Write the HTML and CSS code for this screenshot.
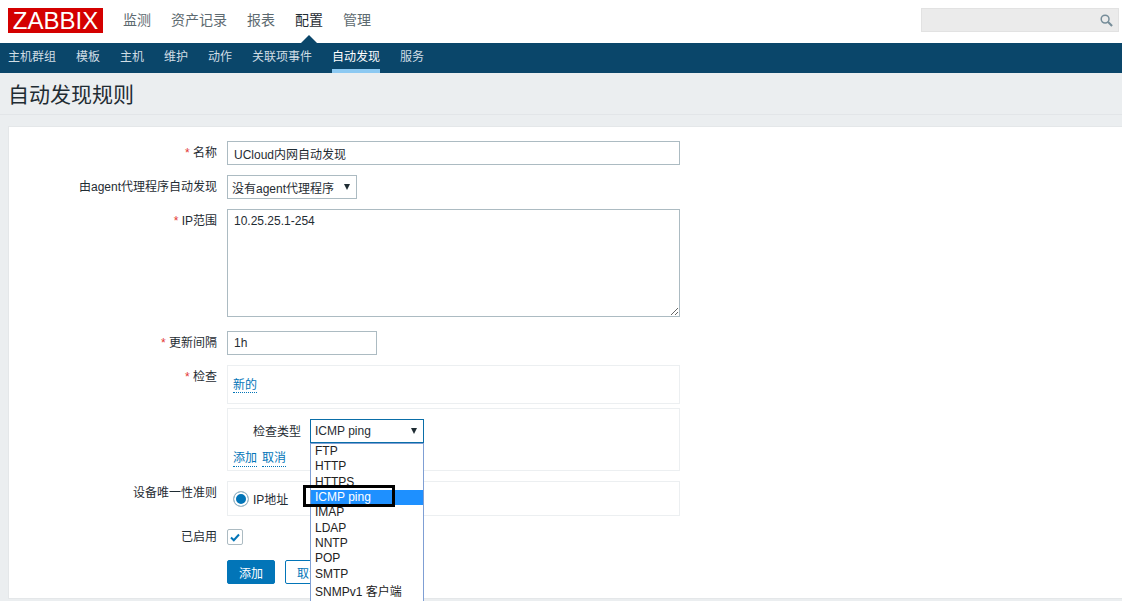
FILE: index.html
```html
<!DOCTYPE html>
<html lang="zh-CN">
<head>
    <meta charset="UTF-8">
    <meta name="viewport" content="width=device-width, initial-scale=1.0">
    <title>自动发现规则</title>
    <link rel="stylesheet" href="styles.css">
</head>
<body>

<!-- top menu -->
<header class="top-nav">
    <a href="#" class="logo">ZABBIX</a>
    <nav class="top-menu">
        <a href="#">监测</a>
        <a href="#">资产记录</a>
        <a href="#">报表</a>
        <a href="#" class="selected">配置</a>
        <a href="#">管理</a>
    </nav>
    <div class="search">
        <svg width="13" height="13" viewBox="0 0 14 14" fill="none" stroke="#768d99">
            <circle cx="5.5" cy="5.5" r="4.2" stroke-width="1.6"/>
            <path d="M8.7 8.7L13 13" stroke-width="2.2"/>
        </svg>
    </div>
</header>

<!-- sub menu -->
<nav class="sub-menu">
    <a href="#">主机群组</a>
    <a href="#">模板</a>
    <a href="#">主机</a>
    <a href="#">维护</a>
    <a href="#">动作</a>
    <a href="#">关联项事件</a>
    <a href="#" class="selected">自动发现</a>
    <a href="#">服务</a>
</nav>

<div class="title-bar">
    <h1>自动发现规则</h1>
</div>

<main class="form-box">
    <div class="row">
        <label class="row-label"><span class="star">*</span> 名称</label>
        <input class="text-input wide" type="text" value="UCloud内网自动发现">
    </div>
    <div class="row">
        <label class="row-label">由agent代理程序自动发现</label>
        <div class="select proxy-select"><span>没有agent代理程序</span><i class="caret"></i></div>
    </div>
    <div class="row row-textarea">
        <label class="row-label"><span class="star">*</span> IP范围</label>
        <textarea class="text-input wide ip-range">10.25.25.1-254</textarea>
    </div>
    <div class="row">
        <label class="row-label"><span class="star">*</span> 更新间隔</label>
        <input class="text-input short" type="text" value="1h">
    </div>
    <div class="row row-tight">
        <label class="row-label"><span class="star">*</span> 检查</label>
        <div class="field-box checks-box"><a href="#" class="link">新的</a></div>
    </div>
    <div class="row">
        <div class="row-label"></div>
        <div class="field-box check-form">
            <div class="check-type">
                <label class="type-label">检查类型</label>
                <div class="select type-select">
                    <span>ICMP ping</span><i class="caret"></i>
                    <!-- opened list -->
                    <ul class="dropdown">
                        <li>FTP</li>
                        <li>HTTP</li>
                        <li>HTTPS</li>
                        <li class="selected">ICMP ping</li>
                        <li>IMAP</li>
                        <li>LDAP</li>
                        <li>NNTP</li>
                        <li>POP</li>
                        <li>SMTP</li>
                        <li class="tall">SNMPv1 客户端</li>
                    </ul>
                    <div class="mark"></div>
                </div>
            </div>
            <div class="check-links">
                <a href="#" class="link">添加</a>
                <a href="#" class="link">取消</a>
            </div>
        </div>
    </div>
    <div class="row row-radio">
        <label class="row-label">设备唯一性准则</label>
        <div class="field-box radio-box"><i class="radio"></i>IP地址</div>
    </div>
    <div class="row row-check">
        <label class="row-label">已启用</label>
        <div class="checkbox">
            <svg width="10" height="9" viewBox="0 0 10 9" fill="none" stroke="#0275b8" stroke-width="2">
                <path d="M1 4.5L3.8 7.2L9 1.5"/>
            </svg>
        </div>
    </div>
    <div class="buttons">
        <button class="btn primary">添加</button>
        <button class="btn">取消</button>
    </div>
</main>

</body>
</html>
```

FILE: styles.css
```css
html, body {
    height: 100%;
    overflow: hidden;
}

body {
    margin: 0;
    background-color: #ebeef0;
    color: #1f2c33;
    font-family: "Liberation Sans", "Noto Sans CJK SC", sans-serif;
    font-size: 12px;
}

a {
    color: inherit;
    text-decoration: none;
}

/* top menu */
.top-nav {
    height: 43px;
    box-sizing: border-box;
    background-color: #fff;
    display: flex;
    align-items: flex-start;
    padding: 8px 3px 0 8px;
}

.logo {
    width: 95px;
    height: 25px;
    background-color: #d40000;
    color: #fff;
    font-size: 24px;
    line-height: 25px;
    text-align: center;
}

.top-menu {
    display: flex;
    gap: 20px;
    margin-left: 20px;
    font-size: 14px;
    line-height: 24px;
    color: #5d6a70;
}

.top-menu a {
    position: relative;
}

.top-menu .selected {
    color: #1f2c33;
}

/* little arrow above the sub menu */
.top-menu .selected::after {
    content: "";
    position: absolute;
    left: 6px;
    bottom: -11px;
    border: 8px solid transparent;
    border-top: 0;
    border-bottom-color: #0a466a;
}

.search {
    margin-left: auto;
    width: 198px;
    height: 24px;
    box-sizing: border-box;
    background-color: #ebebeb;
    border: 1px solid #e2e2e2;
    display: flex;
    align-items: center;
    justify-content: flex-end;
    padding-right: 5px;
}

/* sub menu */
.sub-menu {
    height: 30px;
    background-color: #0a466a;
    display: flex;
    gap: 20px;
    padding-left: 8px;
    color: #d0dde5;
    line-height: 29px;
}

.sub-menu .selected {
    color: #fff;
    border-bottom: 4px solid #8cc9f2;
    height: 26px;
}

.title-bar {
    height: 41px;
    border-bottom: 1px solid #e2e5e8;
    margin-bottom: 11px;
    padding-left: 8px;
}

.title-bar h1 {
    margin: 0;
    font-size: 21px;
    font-weight: 400;
    line-height: 44px;
}

/* form */
.form-box {
    margin-left: 8px;
    background-color: #fff;
    border: 1px solid #e4e7e9;
    border-right: 0;
    padding: 14px 0 14px 0;
}

.row {
    display: flex;
    gap: 10px;
    margin-bottom: 10px;
}

.row-textarea {
    margin-bottom: 14px;
}

.row-tight {
    margin-bottom: 4px;
}

.row-radio {
    margin-bottom: 13px;
}

.row-check {
    margin-bottom: 15px;
}

.row-label {
    width: 208px;
    flex-shrink: 0;
    text-align: right;
    line-height: 16px;
    padding-top: 4px;
}

.row-check .row-label {
    padding-top: 0;
}

.star {
    color: #e33734;
}

.text-input {
    display: block;
    box-sizing: border-box;
    height: 24px;
    border: 1px solid #acbbc2;
    padding: 0 5px 0 6px;
    margin: 0;
    color: #1f2c33;
    font: inherit;
    outline: none;
}

.wide {
    width: 453px;
}

.short {
    width: 150px;
}

.ip-range {
    height: 108px;
    padding-top: 4px;
}

.select {
    box-sizing: border-box;
    height: 24px;
    border: 1px solid #acbbc2;
    display: flex;
    align-items: center;
    justify-content: space-between;
    padding: 0 5px 0 4px;
    background-color: #fff;
}

.proxy-select {
    width: 130px;
}

.type-select {
    width: 114px;
    position: relative;
    border-color: #0a6ea8;
}

.caret {
    border: 3px solid transparent;
    border-top: 6px solid #1f2c33;
    border-bottom: 0;
    margin-right: 1px;
}

.field-box {
    box-sizing: border-box;
    width: 453px;
    border: 1px solid #eceff1;
}

.checks-box {
    height: 39px;
    padding: 11px 5px 0;
    line-height: 16px;
}

.link {
    color: #0275b8;
    border-bottom: 1px dotted #0275b8;
}

.check-form {
    height: 63px;
    padding: 10px 5px 0;
}

.check-type {
    display: flex;
    align-items: center;
    gap: 9px;
    padding-left: 20px;
}

.type-label {
    padding-bottom: 2px;
}

.check-links {
    display: flex;
    gap: 5px;
    margin-top: 8px;
    line-height: 15px;
}

.radio-box {
    height: 35px;
    padding-left: 5px;
    display: flex;
    align-items: center;
    gap: 4px;
}

.radio {
    box-sizing: border-box;
    width: 16px;
    height: 16px;
    border-radius: 50%;
    border: 1px solid #acbbc2;
    background-color: #0275b8;
    box-shadow: inset 0 0 0 2px #fff;
}

.checkbox {
    box-sizing: border-box;
    width: 16px;
    height: 16px;
    border: 1px solid #acbbc2;
    border-radius: 2px;
    display: flex;
    align-items: center;
    justify-content: center;
}

.buttons {
    display: flex;
    gap: 10px;
    margin-left: 218px;
}

.btn {
    width: 48px;
    height: 24px;
    padding: 0;
    border: 1px solid #0275b8;
    border-radius: 2px;
    background-color: #fff;
    color: #0275b8;
    font: inherit;
}

.btn.primary {
    background-color: #0275b8;
    color: #fff;
}

/* opened select list, hangs over the form */
.dropdown {
    position: absolute;
    top: 23px;
    left: -1px;
    width: 114px;
    box-sizing: border-box;
    height: 170px;
    margin: 0;
    padding: 0;
    list-style: none;
    background-color: #fff;
    border: 1px solid #7f9fd4;
    z-index: 2;
    color: #222;
}

.dropdown li {
    height: 15.35px;
    line-height: 15px;
    padding-left: 4px;
}

.dropdown .selected {
    background-color: #1e90ff;
    color: #fff;
}

.dropdown .tall {
    height: 18px;
    line-height: 20px;
}

/* black box drawn on the screenshot */
.mark {
    position: absolute;
    top: 65px;
    left: -8px;
    width: 92px;
    height: 22px;
    box-sizing: border-box;
    border: 3px solid #000;
    z-index: 3;
}
```
